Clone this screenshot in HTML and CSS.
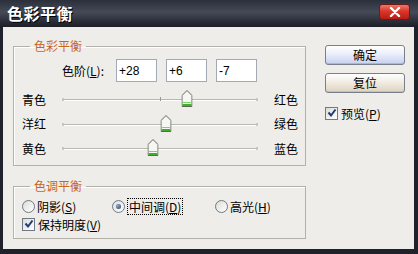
FILE: index.html
```html
<!DOCTYPE html>
<html>
<head>
  <meta charset="utf-8">
  <link rel="stylesheet" href="styles.css">
</head>
<body>
  <div class="window">
    <div class="titlebar">
      <span class="title">色彩平衡</span>
      <span class="close-btn">
        <svg width="12" height="10" viewBox="0 0 12 10"><path d="M2 1 L10 9 M10 1 L2 9" stroke="#fff" stroke-width="2.4" stroke-linecap="round"/></svg>
      </span>
    </div>

    <div class="client">
      <div class="main">
        <!-- color balance sliders -->
        <fieldset class="group balance">
          <legend>色彩平衡</legend>
          <div class="level-row">
            <label class="level-label">色阶(<u>L</u>):</label>
            <input type="text" class="level-input" value="+28">
            <input type="text" class="level-input" value="+6">
            <input type="text" class="level-input" value="-7">
          </div>

          <div class="slider-row">
            <span class="side-label">青色</span>
            <div class="track">
              <span class="track-line"></span>
              <span class="center-tick"></span>
              <span class="thumb" style="left: 64%;">
                <svg width="11" height="17" viewBox="0 0 11 17"><path d="M5.5 0.5 L10.5 5.5 V16.5 H0.5 V5.5 Z" fill="#f6f6f2" stroke="#5a6a58"/><rect x="1" y="12" width="9" height="1" fill="#7fd26a"/><rect x="1" y="14" width="9" height="2" fill="#3fae2a"/></svg>
              </span>
            </div>
            <span class="end-label">红色</span>
          </div>

          <div class="slider-row">
            <span class="side-label">洋红</span>
            <div class="track">
              <span class="track-line"></span>
              <span class="thumb" style="left: 53%;">
                <svg width="11" height="17" viewBox="0 0 11 17"><path d="M5.5 0.5 L10.5 5.5 V16.5 H0.5 V5.5 Z" fill="#f6f6f2" stroke="#5a6a58"/><rect x="1" y="12" width="9" height="1" fill="#7fd26a"/><rect x="1" y="14" width="9" height="2" fill="#3fae2a"/></svg>
              </span>
            </div>
            <span class="end-label">绿色</span>
          </div>

          <div class="slider-row">
            <span class="side-label">黄色</span>
            <div class="track">
              <span class="track-line"></span>
              <span class="thumb" style="left: 46.5%;">
                <svg width="11" height="17" viewBox="0 0 11 17"><path d="M5.5 0.5 L10.5 5.5 V16.5 H0.5 V5.5 Z" fill="#f6f6f2" stroke="#5a6a58"/><rect x="1" y="12" width="9" height="1" fill="#7fd26a"/><rect x="1" y="14" width="9" height="2" fill="#3fae2a"/></svg>
              </span>
            </div>
            <span class="end-label">蓝色</span>
          </div>
        </fieldset>

        <!-- tone balance -->
        <fieldset class="group tone">
          <legend>色调平衡</legend>
          <div class="radio-row">
            <span class="option opt-shadow"><span class="radio"></span>阴影(<u>S</u>)</span>
            <span class="option opt-mid"><span class="radio checked"></span><span class="focus">中间调(<u>D</u>)</span></span>
            <span class="option"><span class="radio"></span>高光(<u>H</u>)</span>
          </div>
          <div class="check-row">
            <span class="checkbox">
              <svg width="10" height="10" viewBox="0 0 10 10"><path d="M1.5 4.5 L4 7.5 L8.5 1.5" fill="none" stroke="#1f3a7a" stroke-width="2"/></svg>
            </span>
            保持明度(<u>V</u>)
          </div>
        </fieldset>
      </div>

      <div class="side">
        <button class="btn btn-default">确定</button>
        <button class="btn btn-reset">复位</button>
        <div class="preview">
          <span class="checkbox">
            <svg width="10" height="10" viewBox="0 0 10 10"><path d="M1.5 4.5 L4 7.5 L8.5 1.5" fill="none" stroke="#1f3a7a" stroke-width="2"/></svg>
          </span>
          预览(<u>P</u>)
        </div>
      </div>
    </div>
  </div>
</body>
</html>
```

FILE: styles.css
```css
body {
  margin: 0;
  width: 418px;
  height: 254px;
  overflow: hidden;
  font-family: "Noto Sans CJK SC", "Liberation Sans", sans-serif;
  font-size: 12px;
  color: #000;
}
.window {
  width: 418px;
  height: 254px;
  box-sizing: border-box;
  background: #1f222a;
  border-left: 3px solid #1f222a;
  border-right: 4px solid #1f222a;
  border-bottom: 5px solid #1f222a;
  display: flex;
  flex-direction: column;
}
.titlebar {
  height: 27px;
  margin: 0 -4px 0 -3px;
  padding: 0 8px 0 7px;
  background: linear-gradient(#2b2f3a 0%, #454a58 45%, #2a2d36 80%, #1c1f26 100%);
  display: flex;
  align-items: center;
  justify-content: space-between;
}
.title {
  color: #fff;
  font-size: 16px;
  font-weight: bold;
  letter-spacing: 0.5px;
  text-shadow: 1px 1px 0 #000;
  line-height: 20px;
  margin-top: -2px;
}
.close-btn {
  width: 29px;
  height: 14px;
  margin-top: -3px;
  border: 1px solid #6b1a14;
  border-radius: 3px;
  background: linear-gradient(#f0776a 0%, #d9352a 45%, #b81d14 100%);
  display: flex;
  align-items: center;
  justify-content: center;
}
.client {
  flex: 1;
  background: #eeede9;
  display: flex;
  align-items: flex-start;
  padding: 11px 0 0 10px;
}
.main {
  width: 293px;
}
.group {
  margin: 0;
  padding: 0 0 3px 8px;
  border: 1px solid #b3b2aa;
  box-shadow: inset 1px 1px 0 #fff;
  min-width: 0;
}
.group legend {
  margin-left: 8px;
  padding: 0 4px;
  color: #c8661e;
  line-height: 16px;
}
.balance {
  height: 128px;
  box-sizing: border-box;
}
.level-row {
  display: flex;
  align-items: center;
  margin: 5px 0 5px 40px;
  height: 23px;
}
.level-label {
  width: 54px;
}
.level-input {
  width: 41px;
  height: 23px;
  box-sizing: border-box;
  margin: 0 9px 0 0;
  padding: 0 2px;
  border: 1px solid #a2aab5;
  background: #fff;
  font-family: "Liberation Sans", sans-serif;
  font-size: 12px;
  color: #000;
}
.slider-row {
  display: grid;
  grid-template-columns: 40px 196px auto;
  align-items: center;
  height: 24.5px;
}
.end-label {
  padding-left: 16px;
  white-space: nowrap;
}
.track {
  position: relative;
  height: 24px;
}
.track-line {
  position: absolute;
  left: 0;
  right: 0;
  top: 12px;
  height: 1px;
  background: #b9b8b0;
  border-bottom: 1px solid #fff;
}
.track-line::before,
.track-line::after {
  content: "";
  position: absolute;
  top: -1px;
  width: 2px;
  height: 3px;
  background: #c9c8c0;
}
.track-line::before { left: 0; }
.track-line::after { right: 0; }
.center-tick {
  position: absolute;
  left: 50%;
  top: 10px;
  width: 1px;
  height: 4px;
  background: #9a998f;
}
.thumb {
  position: absolute;
  top: 3px;
  width: 11px;
  height: 17px;
  transform: translateX(-50%);
}
.thumb svg {
  display: block;
}
.tone {
  margin-top: 12px;
  height: 61px;
  box-sizing: border-box;
}
.radio-row {
  display: flex;
  align-items: center;
  height: 18px;
  margin-top: 3px;
}
.option {
  display: flex;
  align-items: center;
}
.opt-shadow { width: 90px; }
.opt-mid { width: 103px; }
.radio {
  width: 11px;
  height: 11px;
  border: 1px solid #6f7a86;
  border-radius: 50%;
  background: linear-gradient(135deg, #dcdcd6, #fff);
  margin-right: 2px;
  display: flex;
  align-items: center;
  justify-content: center;
}
.radio.checked::after {
  content: "";
  width: 5px;
  height: 5px;
  border-radius: 50%;
  background: radial-gradient(circle at 35% 35%, #8fa6c8, #2b3f66);
}
.focus {
  border: 1px dotted #000;
  padding: 0 1px;
  line-height: 15px;
}
.check-row,
.preview {
  display: flex;
  align-items: center;
  height: 18px;
}
.checkbox {
  width: 11px;
  height: 11px;
  border: 1px solid #6f7a86;
  background: linear-gradient(135deg, #dcdcd6, #fff);
  margin-right: 3px;
  display: flex;
  align-items: center;
  justify-content: center;
}
.side {
  width: 80px;
  margin: 7px 0 0 19px;
  display: flex;
  flex-direction: column;
}
.btn {
  height: 20px;
  padding: 0;
  border: 1px solid #7a7f8c;
  border-radius: 3px;
  font-family: "Noto Sans CJK SC", sans-serif;
  font-size: 12px;
  line-height: 16px;
  color: #000;
}
.btn-default {
  background: linear-gradient(#ffffff 0%, #eef0fb 40%, #c6d0ef 100%);
  box-shadow: inset 0 -1px 0 #a9b6e3;
}
.btn-reset {
  margin-top: 8px;
  background: linear-gradient(#ffffff 0%, #f3efe6 40%, #ddd3c0 100%);
  box-shadow: inset 0 -1px 0 #cbbfa8;
}
.preview {
  margin-top: 11px;
}
```
